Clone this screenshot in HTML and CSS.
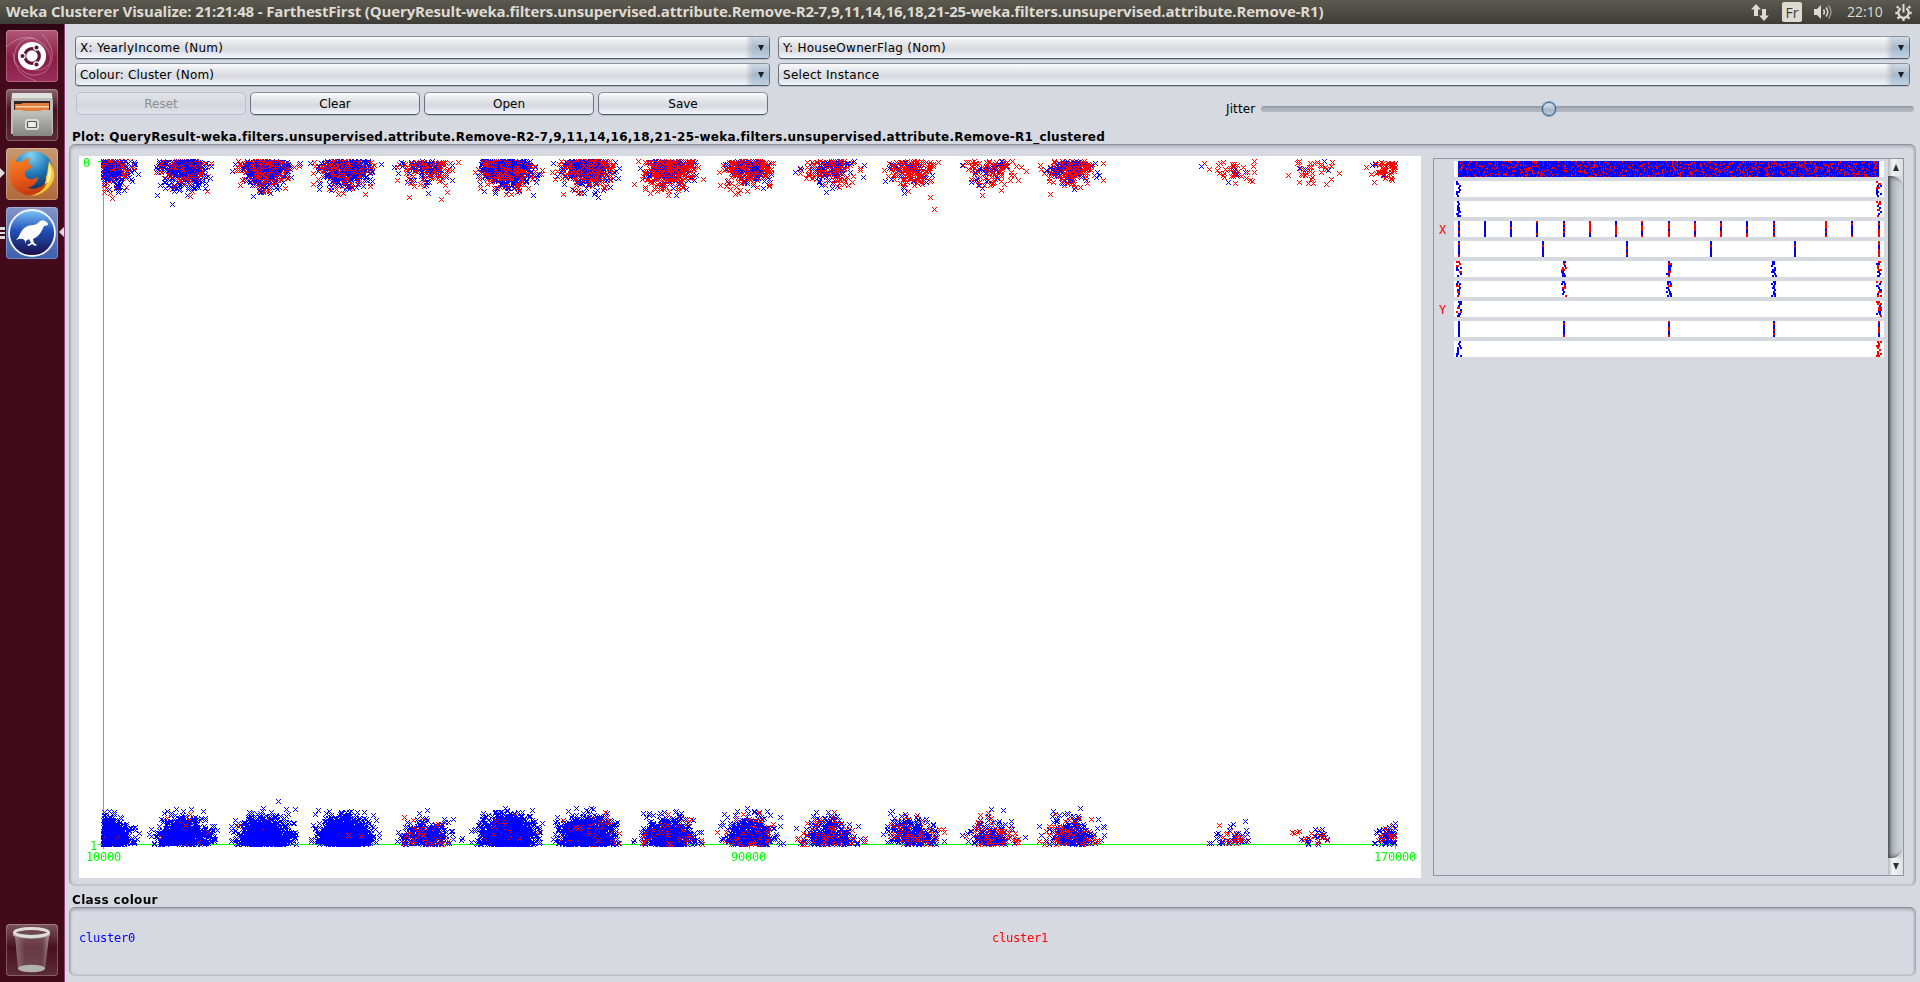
FILE: index.html
```html
<!DOCTYPE html>
<html lang="en">
<head>
<meta charset="utf-8">
<title>Weka Clusterer Visualize</title>
<link rel="stylesheet" href="styles.css">
</head>
<body>
<header class="topbar">
  <span class="title">Weka Clusterer Visualize: 21:21:48 - FarthestFirst (QueryResult-weka.filters.unsupervised.attribute.Remove-R2-7,9,11,14,16,18,21-25-weka.filters.unsupervised.attribute.Remove-R1)</span>
  <div class="tray">
    <svg class="tray-net" width="18" height="17" viewBox="0 0 18 17"><path fill="#dfdbd2" d="M5 0l5 5.500H7V12H3V5.500H0zM13 17l5-5.500h-3V5h-4v6.500H8z"/></svg>
    <span class="lang">Fr</span>
    <svg class="tray-vol" width="20" height="18" viewBox="0 0 20 18"><path fill="#dfdbd2" d="M0 6h3l4-4v14l-4-4H0z"/><g fill="none" stroke="#dfdbd2" stroke-width="1.500"><path d="M9.500 6.500q1.800 2.500 0 5"/><path d="M12 4.500q3.500 4.500 0 9"/><path stroke="#99958c" d="M14.500 2.500q5 6.500 0 13"/></g></svg>
    <span class="clock">22:10</span>
    <svg class="tray-gear" width="17" height="17" viewBox="0 0 17 17"><g fill="none" stroke="#dfdbd2"><path stroke-width="2.200" d="M5.700 4.200a5.200 5.200 0 1 0 5.600 0"/><path stroke-width="2" d="M8.500 0v8.500"/><path stroke-width="2.400" d="M3.500 4L1.800 2.300M13.500 4l1.700-1.700M2.800 9H.3M14.200 9h2.500M4.300 12.800l-1.800 1.900M12.700 12.800l1.800 1.900M8.500 14v3"/></g></svg>
  </div>
</header>
<div class="desktop">
  <nav class="launcher">
    <div class="tile ubuntu">
      <svg width="52" height="52" viewBox="0 0 52 52"><g fill="none" stroke="#fff" stroke-opacity=".3"><path d="M0 17Q20-1 38 15Q48 25 43 34Q36 44 23 38"/><path d="M36 4Q55 25 39 42Q20 52 8 30Q9 7 28 8M7 23Q8 45 30 51"/></g><circle cx="26" cy="26" r="14" fill="#fff"/><circle cx="26" cy="26" r="7.300" fill="none" stroke="#641534" stroke-width="3.200"/><g fill="#641534" stroke="#fff" stroke-width="1.200"><circle cx="16.500" cy="26" r="2.700"/><circle cx="30.500" cy="17.500" r="2.700"/><circle cx="30.500" cy="34.500" r="2.700"/></g></svg>
    </div>
    <div class="tile files">
      <svg width="52" height="52" viewBox="0 0 52 52"><defs><linearGradient id="cab" x2="0" y2="1"><stop stop-color="#c4c4c2"/><stop offset="1" stop-color="#858583"/></linearGradient></defs><path fill="#bdbdba" d="M6 5h40l1 8v32H5V13z"/><path fill="#e0e0dc" d="M6 4h40v5H6z"/><path fill="#302522" d="M8 12h36v10H8z"/><path fill="#e07d3c" d="M9 15h6l2-1h26v8H9z"/><path fill="#f5cfa5" d="M10 17h33v1.500H10z"/><path fill="url(#cab)" d="M7 21h9l2 1h16l2-1h10v26H7z"/><rect x="19" y="30" width="14" height="11" rx="3" fill="#dcdcda"/><rect x="21.500" y="32.500" width="9" height="6" rx="1" fill="#eee" stroke="#555" stroke-width="1.200"/></svg>
    </div>
    <div class="tile firefox">
      <i class="pip pip-left"></i>
      <svg width="52" height="52" viewBox="0 0 52 52"><defs><radialGradient id="globe" cx=".45" cy=".1" r=".9"><stop stop-color="#86d5f4"/><stop offset=".5" stop-color="#247dbb"/><stop offset="1" stop-color="#0b2c5c"/></radialGradient><linearGradient id="fox" x2=".3" y2="1"><stop stop-color="#f28a22"/><stop offset=".6" stop-color="#e85a1b"/><stop offset="1" stop-color="#c53c12"/></linearGradient></defs><circle cx="27" cy="23" r="20" fill="url(#globe)"/><path fill="#f9c92c" d="M43 13q10 14 1 25q-7 9-18 10q12-7 14-16q-1-2 1-6q1-6 2-13z"/><path fill="#fff0a0" d="M43 16q5 9 0 18l-5 6q3-7 4-14z"/><path fill="url(#fox)" d="M6 9q3 5 9 5q5-4 9-4l-2 5 4 3q-1 3-7 5q-1 6 4 8q4 1 8-2q2 1 0 4q-4 7-10 6q8 5 21-5q-8 15-22 13Q4 42 4 27Q3 17 6 9z"/></svg>
    </div>
    <div class="tile weka">
      <i class="marks"><b></b><b></b><b></b></i>
      <svg width="52" height="52" viewBox="0 0 52 52"><defs><linearGradient id="sky" x2="0" y2="1"><stop stop-color="#7fc5f7"/><stop offset=".45" stop-color="#2150b8"/><stop offset="1" stop-color="#1b0e48"/></linearGradient></defs><circle cx="26" cy="26" r="23" fill="url(#sky)" stroke="#f4f6fa" stroke-width="1.800"/><path fill="#fff" d="M10 33q3-3 5-8q4-7 12-7q3 0 5-2q3-4 7-2q3 1 3 4l-4 1-3 6q-3 5-8 7l1 4 3 2-2 1-3-2-3 2-2-1 4-2-2-4-3 2 0 3-1-3q-2-4-9-1z"/></svg>
      <i class="pip pip-right"></i>
    </div>
    <div class="tile trash">
      <svg width="52" height="52" viewBox="0 0 52 52"><defs><linearGradient id="bin"><stop stop-color="#b9a8ae" stop-opacity=".6"/><stop offset=".3" stop-color="#87626f" stop-opacity=".5"/><stop offset=".8" stop-color="#87626f" stop-opacity=".5"/><stop offset="1" stop-color="#c8bcc0" stop-opacity=".7"/></linearGradient></defs><path fill="url(#bin)" d="M9 12h34l-4 33q-13 4-27 0z"/><ellipse cx="25.500" cy="44.500" rx="13.500" ry="3.800" fill="#b3b3ae"/><path fill="#9c9c98" d="M7 8v4q18 6 37 0V8z"/><ellipse cx="25.500" cy="8.500" rx="17" ry="4" fill="#6e4854" stroke="#deded9" stroke-width="3"/></svg>
    </div>
  </nav>
  <main class="window">
    <div class="controls">
      <div class="left">
        <div class="combo"><span class="w-x">X: YearlyIncome (Num)</span><i></i></div>
        <div class="combo"><span class="w-c">Colour: Cluster (Nom)</span><i></i></div>
        <div class="buttons">
          <button class="btn" disabled>Reset</button><button class="btn">Clear</button><button class="btn">Open</button><button class="btn">Save</button>
        </div>
      </div>
      <div class="right">
        <div class="combo"><span class="w-y">Y: HouseOwnerFlag (Nom)</span><i></i></div>
        <div class="combo"><span class="w-s">Select Instance</span><i></i></div>
        <div class="jitter"><label>Jitter</label><div class="track"><i class="thumb"></i></div></div>
      </div>
    </div>
    <h2 class="caption plot-caption"><span>Plot: QueryResult-weka.filters.unsupervised.attribute.Remove-R2-7,9,11,14,16,18,21-25-weka.filters.unsupervised.attribute.Remove-R1_clustered</span></h2>
    <section class="panel plot-panel">
      <div class="plot">
        <canvas id="scatter" width="1342" height="722"></canvas>
        <span class="axis y0">0</span><span class="axis y1">1</span>
        <span class="axis x0">10000</span><span class="axis x1">90000</span><span class="axis x2">170000</span>
      </div>
      <div class="attributes">
        <div class="attr-list">
          <div class="attr"><b></b><canvas width="430" height="16"></canvas></div>
          <div class="attr"><b></b><canvas width="430" height="16"></canvas></div>
          <div class="attr"><b></b><canvas width="430" height="16"></canvas></div>
          <div class="attr"><b>X</b><canvas width="430" height="16"></canvas></div>
          <div class="attr"><b></b><canvas width="430" height="16"></canvas></div>
          <div class="attr"><b></b><canvas width="430" height="16"></canvas></div>
          <div class="attr"><b></b><canvas width="430" height="16"></canvas></div>
          <div class="attr"><b>Y</b><canvas width="430" height="16"></canvas></div>
          <div class="attr"><b></b><canvas width="430" height="16"></canvas></div>
          <div class="attr"><b></b><canvas width="430" height="16"></canvas></div>
        </div>
        <div class="scroll"><div class="arrow up"></div><div class="rail"></div><div class="arrow down"></div></div>
      </div>
    </section>
    <h2 class="caption class-caption">Class colour</h2>
    <section class="panel class-panel"><span class="c0">cluster0</span><span class="c1">cluster1</span></section>
  </main>
</div>
<script src="plot.js"></script>
</body>
</html>
```

FILE: styles.css
```css
* { box-sizing: border-box; }
body { margin: 0; width: 1920px; height: 982px; overflow: hidden; display: flex; flex-direction: column; background: #d6d9e0; color: #000; font: 12px "DejaVu Sans", sans-serif; }
canvas, svg { display: block; }

.topbar { height: 24px; flex: none; display: flex; justify-content: space-between; align-items: center; padding: 0 8px 0 6px; background: linear-gradient(#5c5a50, #3d3c38); color: #dfdbd2; font-family: "Open Sans", sans-serif; }
.title { font-size: 15px; font-weight: 700; letter-spacing: -.149px; white-space: nowrap; line-height: 22px; height: 24px; }
.tray { display: flex; align-items: center; height: 24px; }
.lang { width: 20px; height: 20px; margin: 0 12px 0 13px; border-radius: 2px; background: #dfdbd2; color: #3d3c38; font-size: 14px; line-height: 21px; text-align: center; }
.clock { width: 36px; margin: 0 12px 0 13px; font-size: 14px; line-height: 24px; white-space: nowrap; }

.desktop { flex: 1; display: flex; min-height: 0; }
.launcher { width: 65px; flex: none; display: flex; flex-direction: column; gap: 7px; padding: 6px 0 6px 6px; background: linear-gradient(#2f0613, #430a1b 40px); border-right: 1px solid #8a4278; }
.tile { position: relative; width: 52px; height: 52px; flex: none; border-radius: 4px; box-shadow: inset 0 0 0 1px rgba(255,255,255,.25); }
.ubuntu { background: linear-gradient(#b05a7a, #8a1c45 55%, #99305a); }
.files { background: linear-gradient(#8c6673, #48101f 40%, #5c2c3a); }
.firefox { background: linear-gradient(#c79a74, #b0683a); }
.weka { background: linear-gradient(#8394c8, #3c60ac); }
.trash { margin-top: auto; background: linear-gradient(#7c5461, #48101f 45%, #5c2c3a); }
.pip { position: absolute; top: 20px; border: 5px solid transparent; }
.pip-left { left: -6px; border-left-color: #dedbdd; border-right-width: 0; }
.pip-right { right: -6px; border-right-color: #dedbdd; border-left-width: 0; }
.marks { position: absolute; left: -6px; top: 20px; display: flex; flex-direction: column; gap: 2px; }
.marks b { width: 5px; height: 2.500px; background: #dedbdd; }

.window { flex: 1; min-width: 0; display: flex; flex-direction: column; padding: 12px 4px 6px; }
.controls { display: flex; gap: 8px; height: 82px; padding: 0 6px; }
.left { width: 695px; display: flex; flex-direction: column; gap: 4px; }
.right { flex: 1; display: flex; flex-direction: column; gap: 4px; }
.combo { height: 23px; flex: none; display: flex; justify-content: space-between; border: 1px solid #6c737e; border-top-color: #8d939c; border-bottom-color: #4d5967; border-radius: 4px; background: linear-gradient(#fbfbfc, #e2e4e8 35%, #d6d9df 60%, #f2f5fb); box-shadow: 0 1px 0 #b8bcc3; line-height: 23px; padding-left: 4px; overflow: hidden; white-space: nowrap; }
.w-x, .w-y { letter-spacing: .27px; }
.w-c { letter-spacing: .18px; }
.w-s { letter-spacing: .3px; }
.combo i { width: 24px; position: relative; background: linear-gradient(#cfdbe6, #a5b9cd 50%, #bdd2e5) right / 16px 100% no-repeat, linear-gradient(90deg, rgba(120,140,165,0), rgba(120,140,165,.4)) left / 8px 100% no-repeat; }
.combo i::after { content: ""; position: absolute; right: 5px; top: 8px; border: 3.500px solid transparent; border-top: 6px solid #1b1e22; border-bottom: 0; }
.buttons { display: flex; gap: 4px; margin: 2px 0 0 1px; }
.btn { width: 170px; height: 23px; padding: 1px 0 0; border: 1px solid #6c737e; border-top-color: #8d939c; border-bottom-color: #4d5967; border-radius: 5px; background: linear-gradient(#fbfbfc, #e2e4e8 35%, #d6d9df 60%, #f2f5fb); box-shadow: 0 1px 0 #b8bcc3; font: 12px/20px "DejaVu Sans", sans-serif; color: #000; }
.btn:disabled { color: #8e8f91; border-color: #bcc0c8; background: linear-gradient(#dfe2e7, #d4d7dd 60%, #dde1e8); box-shadow: none; }
.jitter { display: flex; align-items: center; gap: 4px; height: 37px; margin: 0 -4px 0 448px; padding-top: 9px; }
.jitter label { width: 31px; letter-spacing: .1px; }
.track { position: relative; flex: 1; height: 6px; border-radius: 3px; background: linear-gradient(#8f949e, #a9adb7 40%, #b6bac3); }
.thumb { position: absolute; left: 281px; top: -4px; width: 14px; height: 14px; border-radius: 50%; border: 1.500px solid #31587e; background: linear-gradient(#dde5ec, #a5b7c9 60%, #b8cadb); box-shadow: 0 0 0 1px #7fa6ca; }

.caption { margin: 0; padding-left: 3px; font: bold 12px/17px "DejaVu Sans", sans-serif; letter-spacing: .25px; white-space: nowrap; }
.plot-caption { height: 26px; padding-top: 11px; }
.class-caption { height: 21px; padding-top: 6px; letter-spacing: .35px; }
.panel { border: 1px solid #bcbfc5; border-top: 1px solid #8d9096; border-left-color: #a0a3aa; border-right-color: #a5a8ae; border-radius: 6px; box-shadow: inset 0 2px 3px #aeb1b8, inset 1px 0 2px #b8bbc2, inset -1px 0 2px #b8bbc2; }
.plot-panel { height: 742px; display: flex; padding: 11px 11px 7px 9px; gap: 12px; }
.plot { position: relative; width: 1342px; height: 722px; background: #fff; }
.axis { position: absolute; color: #0f0; font: 12px/14px "DejaVu Sans Mono", monospace; letter-spacing: -.22px; }
.y0 { left: 4px; top: 0; } .y1 { left: 11px; top: 683px; }
.x0 { left: 7px; top: 694px; } .x1 { left: 652px; top: 694px; } .x2 { left: 1295px; top: 694px; }
.attributes { flex: 1; height: 718px; margin-top: 2px; display: flex; justify-content: space-between; border: 1px solid #92969e; }
.attr-list { padding: 2px 0 0 5px; display: flex; flex-direction: column; gap: 4px; }
.attr { display: flex; height: 16px; }
.attr b { width: 15px; font: 12px/19px "DejaVu Sans Mono", monospace; color: red; }
.attr canvas { background: #fff; }
.scroll { width: 15px; display: flex; flex-direction: column; background: #d6d9e0; }
.arrow { height: 17px; flex: none; display: flex; align-items: center; justify-content: center; background: linear-gradient(90deg, #b5b8bd, #f1f2f4 30%, #dddfe3); }
.arrow::after { content: ""; border: 3.500px solid transparent; }
.up::after { border-bottom: 7px solid #2c2e32; border-top: 0; }
.down::after { border-top: 7px solid #2c2e32; border-bottom: 0; }
.rail { flex: 1; background: linear-gradient(90deg, #6f7379, #a3a7ae 20%, #c3c7ce 60%, #d3d7de); box-shadow: inset 2px 3px 4px -2px #45484d, inset 2px -3px 4px -2px #45484d; border-radius: 0 12px 12px 0; }
.class-panel { height: 69px; display: grid; grid-template-columns: 913px 1fr; padding: 23px 9px; font: 12px/14px "DejaVu Sans Mono", monospace; letter-spacing: -.22px; }
.c0 { color: #00f; } .c1 { color: red; }
```

FILE: plot.js
```js
const BLUE = "#0000ff", RED = "#ff0000", GREEN = "#00ff00";

// Repeatable random numbers, so the jitter is the same on every load
let seed = 48151;
function rnd() {
  seed = (seed + 0x6d2b79f5) | 0;
  let t = Math.imul(seed ^ (seed >>> 15), 1 | seed);
  t = (t + Math.imul(t ^ (t >>> 7), 61 | t)) ^ t;
  return ((t ^ (t >>> 14)) >>> 0) / 4294967296;
}
function gauss() {
  return Math.sqrt(-2 * Math.log(1 - rnd())) * Math.cos(2 * Math.PI * rnd());
}

const g = document.getElementById("scatter").getContext("2d");
const LEFT = 24, RIGHT = 1316, TOP = 5, BOTTOM = 688, STEP = 80.75;

g.fillStyle = GREEN;
g.fillRect(LEFT, TOP, 1, BOTTOM - TOP);
g.fillRect(LEFT - 5, TOP, 5, 1);
g.fillRect(LEFT - 5, BOTTOM, RIGHT - LEFT + 5, 1);
[LEFT, 670, RIGHT].forEach(x => g.fillRect(x, BOTTOM, 1, 5));

function cross(x, y, color) {
  x = Math.round(x); y = Math.round(y);
  g.fillStyle = color;
  for (let i = -2; i <= 2; i++) {
    g.fillRect(x + i, y + i, 1, 1);
    g.fillRect(x + i, y - i, 1, 1);
  }
}

// [income in 10k, points at 0, red share at 0, points at 1, red share at 1]
const groups = [
  [1, 340, .38, 600, .02], [2, 520, .38, 780, .03], [3, 560, .45, 1150, .015],
  [4, 560, .42, 1500, .01], [5, 190, .65, 330, .22], [6, 720, .50, 1700, .03],
  [7, 560, .50, 1250, .10], [8, 480, .76, 750, .15], [9, 300, .66, 560, .17],
  [10, 190, .68, 430, .25], [11, 190, .76, 300, .35], [12, 120, .80, 220, .40],
  [13, 270, .70, 330, .35], [15, 40, .85, 52, .45], [16, 38, .88, 34, .40],
  [17, 52, .92, 56, .35]
];
for (const [income, n0, r0, n1, r1] of groups) {
  const cx = LEFT + (income - 1) * STEP;
  const spread = income > 13 ? 10.5 : 12;
  for (const [n, share, base, dir] of [[n0, r0, TOP, 1], [n1, r1, BOTTOM, -1]]) {
    for (let i = 0; i < n;) {
      const x = cx + gauss() * spread, y = base + dir * Math.abs(gauss()) * 12;
      if (x < LEFT || x > RIGHT || Math.abs(x - cx) > 36 || Math.abs(y - base) > (income > 13 ? 23 : 36)) continue;
      cross(x, y, rnd() < share ? RED : BLUE);
      i++;
    }
  }
}
// Far outliers
[[93, 48, 0], [33, 42, 1], [362, 43, 1], [851, 41, 1], [855, 53, 1], [785, 9, 0], [199, 645, 0]]
  .forEach(([x, y, red]) => cross(x, y, red ? RED : BLUE));

// Attribute strips: tick count, whether the ticks wander, red share of each end
const strips = [
  null, [2, 1, .2, .4], [2, 1, .1, .4], [17, 0, .15, .7], [6, 0, .1, .4],
  [5, 1, .4, .3], [5, 1, .4, .2], [2, 1, .3, .75], [5, 0, 0, .5], [2, 1, 0, 1]
];
document.querySelectorAll(".attr canvas").forEach((canvas, row) => {
  const c = canvas.getContext("2d");
  const spec = strips[row];
  if (!spec) {
    c.fillStyle = BLUE;
    c.fillRect(4, 0, 421, 16);
    c.fillStyle = RED;
    for (let x = 4; x < 424; x++) {
      for (let y = 0; y < 16; y++) {
        if (rnd() < .13 + .06 * x / 425) c.fillRect(x, y, 1, rnd() < .5 ? 2 : 1);
      }
    }
    return;
  }
  const [n, wander, r0, r1] = spec;
  for (let k = 0; k < n; k++) {
    if (row === 3 && k === 13) continue;
    const x = 4 + Math.floor(k * 420 / (n - 1));
    for (let y = 0; y < 16; y += 2) {
      const dx = wander ? Math.round(rnd() * 4 - 2) : 0;
      c.fillStyle = rnd() < r0 + (r1 - r0) * k / (n - 1) ? RED : BLUE;
      c.fillRect(x + dx, y, 2, 2);
      if (wander && rnd() < .8) c.fillRect(x + Math.round(rnd() * 4 - 2), y, 2, 2);
    }
  }
});
```
